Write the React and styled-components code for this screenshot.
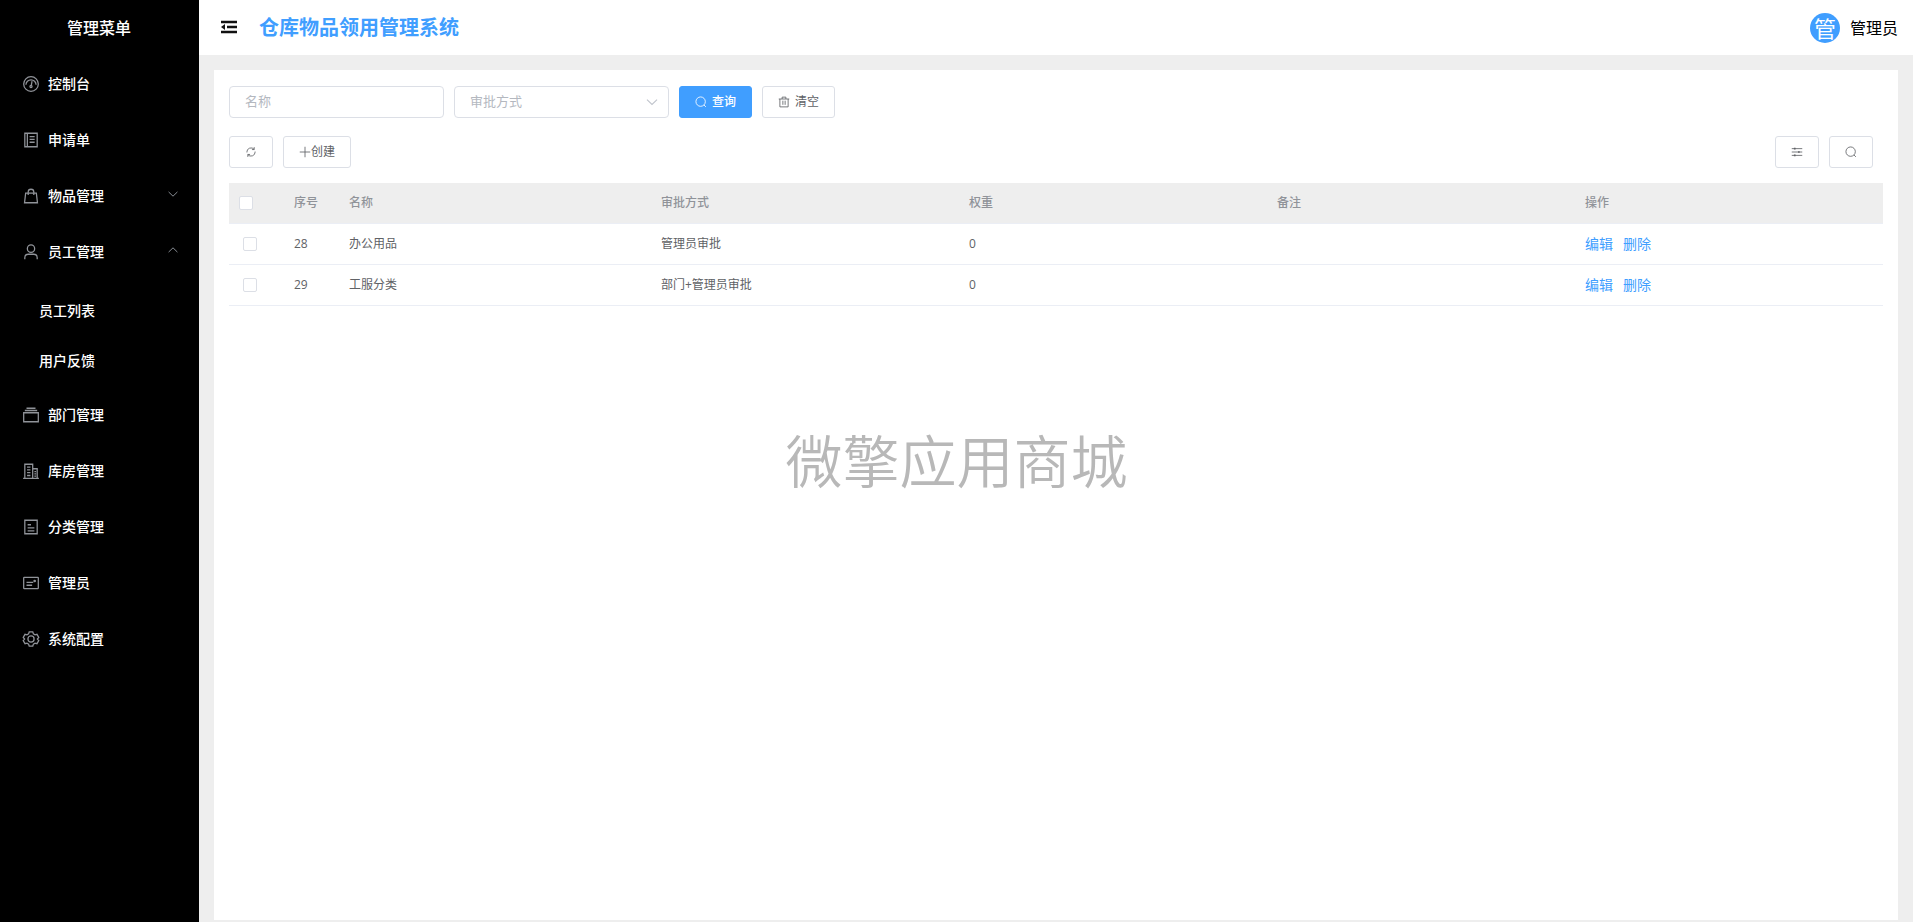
import React, { useState } from 'react'
import styled, { createGlobalStyle, css } from 'styled-components'

const GlobalStyle = createGlobalStyle`
* {
    box-sizing: border-box;
}
body {
    margin: 0;
    font-family: "Open Sans", "Noto Sans CJK SC", sans-serif;
    font-size: 14px;
    line-height: 18px;
    color: #606266;
}
button, input, select {
    font-family: inherit;
    line-height: inherit;
}
`

const Svg = styled.svg`
flex: none;
width: ${props => props.$size}px;
height: ${props => props.$size}px;
fill: none;
stroke: currentColor;
stroke-width: 72;
`

const Layout = styled.div`
display: flex;
min-height: 100vh;
`
const Sidebar = styled.nav`
flex: none;
width: 199px;
background: #000;
color: #fff;
`
const SidebarTitle = styled.div`
height: 56px;
line-height: 56px;
font-size: 16px;
font-weight: 500;
text-align: center;
padding-right: 1px;
`
const MenuList = styled.ul`
list-style: none;
margin: 0;
padding: 0;
`
const menuEntry = css`
display: flex;
align-items: center;
width: 100%;
border: 0;
background: none;
color: #fff;
font-size: 14px;
font-weight: 500;
text-decoration: none;
cursor: pointer;
`
const MenuLink = styled.a`
${menuEntry}
height: 56px;
gap: 8px;
padding: 0 19px 0 22px;
`
const MenuButton = styled.button`
${menuEntry}
height: 56px;
gap: 8px;
padding: 0 19px 0 22px;
`
const SubMenu = styled.ul`
list-style: none;
margin: 0;
padding: 6px 0 1px;
`
const SubLink = styled.a`
${menuEntry}
height: 50px;
padding: 0 39px;
`
const MenuIcon = styled.span`
display: flex;
color: #909399;
`
const MenuArrow = styled.span`
display: flex;
margin-left: auto;
padding-bottom: 4px;
color: #8a8f96;
`

const Body = styled.div`
flex: 1;
min-width: 0;
display: flex;
flex-direction: column;
background: #eee;
`
const Header = styled.header`
display: flex;
align-items: center;
height: 55px;
padding: 0 15px 0 21px;
background: #fff;
`
const FoldButton = styled.button`
display: flex;
padding: 0;
margin: 0 21px 2px 0;
border: 0;
background: none;
color: #111;
cursor: pointer;
`
const Title = styled.h1`
margin: 0;
font-size: 20px;
line-height: 28px;
font-weight: 700;
color: #409eff;
`
const User = styled.div`
display: flex;
align-items: center;
gap: 10px;
margin-left: auto;
font-size: 16px;
color: #000;
`
const Avatar = styled.span`
width: 30px;
height: 30px;
border-radius: 50%;
background: #409eff;
color: #fff;
font-size: 22px;
line-height: 30px;
text-align: center;
`
const Card = styled.main`
flex: 1;
margin: 15px 15px 2px;
padding: 16px 15px;
background: #fff;
`
const SearchForm = styled.form`
display: flex;
gap: 10px;
margin-bottom: 18px;
`
const field = css`
width: 215px;
height: 32px;
padding: 0 15px 2px;
border: 1px solid #dcdfe6;
border-radius: 4px;
background: #fff;
font-size: 13px;
outline: none;
`
const TextField = styled.input`
${field}
color: #606266;
&::placeholder {
    color: #b4b8bf;
    opacity: 1;
}
`
const SelectWrap = styled.div`
position: relative;
display: flex;
color: #c0c4cc;
svg {
    position: absolute;
    right: 9px;
    top: 8px;
    pointer-events: none;
}
`
const SelectField = styled.select`
${field}
appearance: none;
color: #b4b8bf;
`
const Button = styled.button`
display: inline-flex;
align-items: center;
justify-content: center;
gap: ${props => props.$gap || 0}px;
height: 32px;
padding: 0 15px;
border: 1px solid ${props => props.$primary ? '#409eff' : '#dcdfe6'};
border-radius: 3px;
background: ${props => props.$primary ? '#409eff' : '#fff'};
color: ${props => props.$primary ? '#fff' : '#606266'};
font-size: 12px;
font-weight: ${props => props.$primary ? 500 : 400};
cursor: pointer;
`
const Toolbar = styled.div`
display: flex;
justify-content: space-between;
margin-bottom: 15px;
`
const ToolGroup = styled.div`
display: flex;
gap: 10px;
&:last-child {
    padding-right: 10px;
}
`
const Table = styled.table`
width: 100%;
table-layout: fixed;
border-collapse: separate;
border-spacing: 0;
font-size: 12px;
`
const Col = styled.col`
width: ${props => props.$width ? `${props.$width}px` : 'auto'};
`
const cell = css`
height: 41px;
padding: 0 10px;
border-bottom: 1px solid #ebeef5;
text-align: left;
`
const HeadCell = styled.th`
${cell}
background: #eee;
color: #909399;
font-weight: 500;
`
const Cell = styled.td`
${cell}
padding-left: ${props => props.$check ? 14 : 10}px;
`
const Checkbox = styled.input`
appearance: none;
display: block;
width: 14px;
height: 14px;
margin: 0;
border: 1px solid #dcdfe6;
border-radius: 2px;
background: #fff;
&:checked {
    background: #409eff;
    border-color: #409eff;
}
`
const Actions = styled.div`
display: flex;
gap: 10px;
`
const ActionLink = styled.a`
color: #409eff;
font-size: 14px;
text-decoration: none;
`
const Watermark = styled.div`
position: fixed;
inset: 0;
display: grid;
place-items: center;
padding-bottom: 6px;
font-family: "Noto Sans CJK SC", sans-serif;
font-size: 57px;
font-weight: 350;
color: #b8b8b8;
pointer-events: none;
`

const shapes = {
    odometer: <>
        <circle cx="512" cy="512" r="416" />
        <path d="M224 560a288 288 0 1 1 576 0" />
        <path d="M570 350 528 600" />
        <circle cx="512" cy="656" r="60" />
    </>,
    notebook: <>
        <path d="M160 128h704v768H160zM304 128v768M432 320h288M432 480h288M432 640h288" />
    </>,
    goods: <>
        <path d="M208 352h608l64 544H144zM352 448V288a160 160 0 0 1 320 0v160" />
    </>,
    user: <>
        <circle cx="512" cy="320" r="208" />
        <path d="M160 928V832a192 192 0 0 1 192-192h320a192 192 0 0 1 192 192v96" />
    </>,
    files: <>
        <path d="M96 384h832v512H96zM160 256h704M256 128h512" />
    </>,
    office: <>
        <path d="M64 928h896M160 928V128h448v800M608 384h256v544M288 288h192M288 448h192M288 608h192M288 768h192M704 544h96M704 672h96M704 800h96" />
    </>,
    document: <>
        <path d="M160 128h704v768H160zM320 384h192M320 560h384M320 736h384" />
    </>,
    postcard: <>
        <rect x="96" y="192" width="832" height="640" rx="32" />
        <path d="M256 480h384M256 640h320" />
        <circle cx="720" cy="400" r="40" fill="currentColor" />
    </>,
    setting: <>
        <circle cx="512" cy="512" r="176" />
        <path d="M410 110h204l36 112 88 50 114-26 102 176-78 90 0 0 78 90-102 176-114-26-88 50-36 112H410l-36-112-88-50-114 26L70 602l78-90-78-90 102-176 114 26 88-50z" />
    </>,
    down: <path d="m190 360 322 312 322-312" />,
    up: <path d="m190 664 322-312 322 312" />,
    search: <>
        <circle cx="480" cy="480" r="400" />
        <path d="m768 768 160 160" />
    </>,
    trash: <>
        <path d="M64 256h896M352 256V96h320v160M160 256v672h704V256M416 400v352M608 400v352" />
    </>,
    refresh: <>
        <path d="M784 290A352 352 0 0 0 160 512v40M784 96v208H592M240 734a352 352 0 0 0 624-222v-40M240 928V720h192" />
    </>,
    sliders: <>
        <path d="M64 224h896M64 512h896M64 800h896" />
        <path strokeWidth="144" d="M320 152v144M672 440v144M320 728v144" />
    </>,
    plus: <path d="M512 64v896M64 512h896" />
}

const Icon = ({ name, size }) => (
    <Svg $size={size} viewBox="0 0 1024 1024" aria-hidden="true">{shapes[name]}</Svg>
)

const FoldIcon = () => (
    <Svg $size={18} viewBox="0 0 18 18" aria-hidden="true">
        <path strokeWidth="2.5" d="M1 4h16M7 9h10M1 14h16" />
        <path stroke="none" fill="currentColor" d="M1 9l4-3v6z" />
    </Svg>
)

const menu = [
    { icon: 'odometer', text: '控制台' },
    { icon: 'notebook', text: '申请单' },
    { icon: 'goods', text: '物品管理', children: [] },
    { icon: 'user', text: '员工管理', children: ['员工列表', '用户反馈'] },
    { icon: 'files', text: '部门管理' },
    { icon: 'office', text: '库房管理' },
    { icon: 'document', text: '分类管理' },
    { icon: 'postcard', text: '管理员' },
    { icon: 'setting', text: '系统配置' }
]

const rows = [
    { id: 28, name: '办公用品', approval: '管理员审批', weight: 0, remark: '' },
    { id: 29, name: '工服分类', approval: '部门+管理员审批', weight: 0, remark: '' }
]

const Menu = () => {
    const [open, setOpen] = useState('员工管理')
    return (
        <MenuList>
            {menu.map(item => (
                <li key={item.text}>
                    {item.children ? (
                        <MenuButton
                            type="button"
                            aria-expanded={open === item.text}
                            onClick={() => setOpen(open === item.text ? '' : item.text)}
                        >
                            <MenuIcon><Icon name={item.icon} size={18} /></MenuIcon>
                            {item.text}
                            <MenuArrow><Icon name={open === item.text ? 'up' : 'down'} size={14} /></MenuArrow>
                        </MenuButton>
                    ) : (
                        <MenuLink href="#">
                            <MenuIcon><Icon name={item.icon} size={18} /></MenuIcon>
                            {item.text}
                        </MenuLink>
                    )}
                    {item.children && open === item.text && (
                        <SubMenu>
                            {item.children.map(text => (
                                <li key={text}><SubLink href="#">{text}</SubLink></li>
                            ))}
                        </SubMenu>
                    )}
                </li>
            ))}
        </MenuList>
    )
}

const DataTable = () => (
    <Table>
        <colgroup>
            <Col $width={55} />
            <Col $width={55} />
            <Col $width={312} />
            <Col />
            <Col />
            <Col />
            <Col />
        </colgroup>
        <thead>
            <tr>
                <HeadCell><Checkbox type="checkbox" aria-label="全选" /></HeadCell>
                <HeadCell>序号</HeadCell>
                <HeadCell>名称</HeadCell>
                <HeadCell>审批方式</HeadCell>
                <HeadCell>权重</HeadCell>
                <HeadCell>备注</HeadCell>
                <HeadCell>操作</HeadCell>
            </tr>
        </thead>
        <tbody>
            {rows.map(row => (
                <tr key={row.id}>
                    <Cell $check><Checkbox type="checkbox" aria-label={row.name} /></Cell>
                    <Cell>{row.id}</Cell>
                    <Cell>{row.name}</Cell>
                    <Cell>{row.approval}</Cell>
                    <Cell>{row.weight}</Cell>
                    <Cell>{row.remark}</Cell>
                    <Cell>
                        <Actions>
                            <ActionLink href="#">编辑</ActionLink>
                            <ActionLink href="#">删除</ActionLink>
                        </Actions>
                    </Cell>
                </tr>
            ))}
        </tbody>
    </Table>
)

const App = () => {
    return (
        <Layout>
            <GlobalStyle />
            <Sidebar>
                <SidebarTitle>管理菜单</SidebarTitle>
                <Menu />
            </Sidebar>
            <Body>
                <Header>
                    <FoldButton type="button" aria-label="收起菜单"><FoldIcon /></FoldButton>
                    <Title>仓库物品领用管理系统</Title>
                    <User><Avatar>管</Avatar>管理员</User>
                </Header>
                <Card>
                    <SearchForm onSubmit={e => e.preventDefault()}>
                        <TextField type="text" placeholder="名称" aria-label="名称" />
                        <SelectWrap>
                            <SelectField aria-label="审批方式" defaultValue="">
                                <option value="">审批方式</option>
                                <option>管理员审批</option>
                                <option>部门+管理员审批</option>
                            </SelectField>
                            <Icon name="down" size={16} />
                        </SelectWrap>
                        <Button type="submit" $primary $gap={5}><Icon name="search" size={12} />查询</Button>
                        <Button type="reset" $gap={5}><Icon name="trash" size={12} />清空</Button>
                    </SearchForm>
                    <Toolbar>
                        <ToolGroup>
                            <Button type="button" aria-label="刷新"><Icon name="refresh" size={12} /></Button>
                            <Button type="button"><Icon name="plus" size={12} />创建</Button>
                        </ToolGroup>
                        <ToolGroup>
                            <Button type="button" aria-label="列设置"><Icon name="sliders" size={12} /></Button>
                            <Button type="button" aria-label="搜索"><Icon name="search" size={12} /></Button>
                        </ToolGroup>
                    </Toolbar>
                    <DataTable />
                </Card>
            </Body>
            <Watermark>微擎应用商城</Watermark>
        </Layout>
    )
}

export default App
